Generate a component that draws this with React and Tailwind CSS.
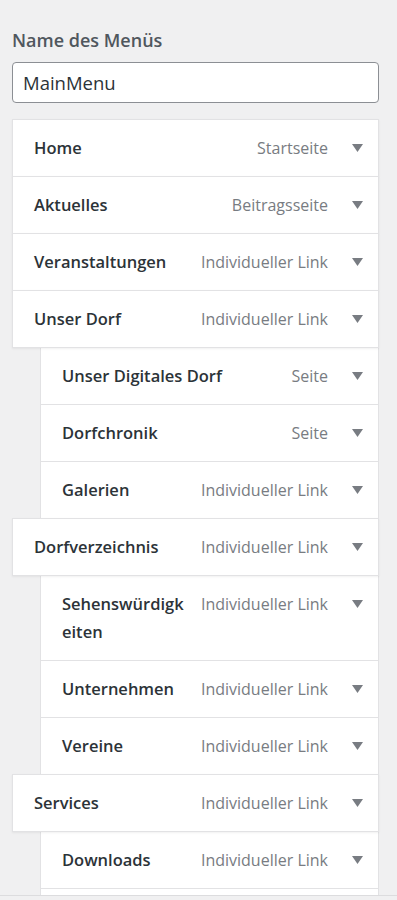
const ITEMS = [
  { title: "Home", type: "Startseite", depth: 0 },
  { title: "Aktuelles", type: "Beitragsseite", depth: 0 },
  { title: "Veranstaltungen", type: "Individueller Link", depth: 0 },
  { title: "Unser Dorf", type: "Individueller Link", depth: 0 },
  { title: "Unser Digitales Dorf", type: "Seite", depth: 1 },
  { title: "Dorfchronik", type: "Seite", depth: 1 },
  { title: "Galerien", type: "Individueller Link", depth: 1 },
  { title: "Dorfverzeichnis", type: "Individueller Link", depth: 0 },
  { title: ["Sehenswürdigk", "eiten"], type: "Individueller Link", depth: 1 },
  { title: "Unternehmen", type: "Individueller Link", depth: 1 },
  { title: "Vereine", type: "Individueller Link", depth: 1 },
  { title: "Services", type: "Individueller Link", depth: 0 },
  { title: "Downloads", type: "Individueller Link", depth: 1 },
];

function Arrow() {
  return (
    <svg width="11" height="8" viewBox="0 0 11 8" className="shrink-0">
      <path d="M0 0 L11 0 L5.5 8 Z" fill="#787c82" />
    </svg>
  );
}

function MenuItem({ item }) {
  const title = Array.isArray(item.title) ? (
    <>
      {item.title[0]}
      <wbr />
      {item.title[1]}
    </>
  ) : (
    item.title
  );
  return (
    <div
      className={`relative -mt-px flex items-start border border-[#e2e2e4] bg-white py-[14px] pl-[21px] pr-[15px] ${
        item.depth ? "ml-[28px]" : "z-10 shadow-[0_1px_2px_rgba(0,0,0,0.06)]"
      }`}
    >
      <span className="min-w-0 flex-1 break-words pr-3 text-[16.5px] font-semibold leading-[28px] text-[#2c3338]">
        {title}
      </span>
      <span className="shrink-0 text-[16px] leading-[28px] text-[#787c82]">{item.type}</span>
      <span className="flex h-[28px] w-[35px] shrink-0 items-center justify-end">
        <Arrow />
      </span>
    </div>
  );
}

export default function App() {
  return (
    <div className="flex h-[900px] flex-col overflow-hidden bg-[#f0f0f1] font-['Open_Sans',sans-serif]">
      <div className="h-[895px] overflow-hidden px-3 pt-[26px]">
        <div className="w-[367px]">
          <label className="block text-[18px] font-semibold leading-[28px] text-[#50575e]">Name des Menüs</label>
          <div className="mt-[8px] flex h-[41px] items-center rounded-[4px] border border-[#8c8f94] bg-white px-[10px] text-[18.5px] text-[#2c3338]">
            MainMenu
          </div>
          <div className="mt-[17px]">
            {ITEMS.map((item, i) => (
              <MenuItem key={i} item={item} />
            ))}
            {/* next item, only its top edge is in view */}
            <div className="-mt-px ml-[28px] h-[57px] border border-[#e2e2e4] bg-white" />
          </div>
        </div>
      </div>
      <div className="flex-1 border-t border-[#dcdcde] bg-[#f0f0f1]" />
    </div>
  );
}
